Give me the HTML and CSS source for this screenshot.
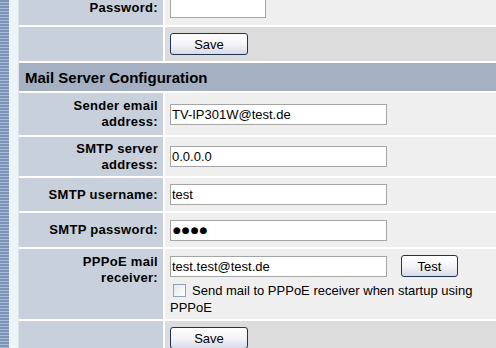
FILE: index.html
```html
<!DOCTYPE html>
<html lang="en">
<head>
  <meta charset="UTF-8">
  <title>Mail Server Configuration</title>
  <link rel="stylesheet" href="styles.css">
</head>
<body>
  <div class="page">
    <div class="stripe"></div>
    <div class="gutter"></div>
    <div class="content">
      <table class="setup">
        <tr class="row-pass">
          <td class="label">Password:</td>
          <td class="value"><input type="password" class="short"></td>
        </tr>
        <tr class="row-save">
          <td class="label"></td>
          <td class="value dark"><button class="btn">Save</button></td>
        </tr>
        <tr class="row-head">
          <td class="head" colspan="2">Mail Server Configuration</td>
        </tr>
        <tr class="row-sender">
          <td class="label">Sender email<br>address:</td>
          <td class="value"><input type="text" value="TV-IP301W@test.de"></td>
        </tr>
        <tr class="row-server">
          <td class="label">SMTP server<br>address:</td>
          <td class="value"><input type="text" value="0.0.0.0"></td>
        </tr>
        <tr class="row-user">
          <td class="label">SMTP username:</td>
          <td class="value"><input type="text" value="test"></td>
        </tr>
        <tr class="row-pw">
          <td class="label">SMTP password:</td>
          <td class="value"><input type="text" class="dots" value="●●●●"></td>
        </tr>
        <tr class="row-pppoe">
          <td class="label top">PPPoE mail<br>receiver:</td>
          <td class="value top">
            <div class="line">
              <input type="text" value="test.test@test.de">
              <button class="btn test">Test</button>
            </div>
            <label class="check"><span class="box"></span>Send mail to PPPoE receiver when startup using PPPoE</label>
          </td>
        </tr>
        <tr class="row-last">
          <td class="label"></td>
          <td class="value dark top"><button class="btn">Save</button></td>
        </tr>
      </table>
    </div>
  </div>
</body>
</html>
```

FILE: styles.css
```css
body {
  margin: 0;
  font-family: "Liberation Sans", Arial, sans-serif;
  background: #ffffff;
  overflow: hidden;
}

.page {
  display: flex;
  height: 348px;
}

.stripe {
  width: 9px;
  background: repeating-linear-gradient(180deg, #7892b8 0, #7892b8 2px, #a9bcd6 2px, #a9bcd6 3px);
}

.gutter {
  width: 9px;
  background: #eef3f7;
  border-right: 1px solid #dde3ea;
}

.content {
  flex: 1;
  overflow: hidden;
}

.setup {
  width: 100%;
  margin-top: -12px;
  border-collapse: separate;
  border-spacing: 0 2px;
  background: #ffffff;
}

.setup td {
  padding: 0;
  vertical-align: middle;
}

.label {
  width: 139px;
  background: #c8d0dc;
  text-align: right;
  font-weight: bold;
  font-size: 13px;
  line-height: 16px;
  padding-right: 5px !important;
  letter-spacing: 0.3px;
  color: #000;
  border-right: 2px solid #ffffff;
}

.value {
  background: #efefef;
  padding-left: 5px !important;
}

.value.dark {
  background: #dcdcdc;
}

.top {
  vertical-align: top !important;
}

.head {
  background: #a5b1c3;
  font-weight: bold;
  font-size: 15px;
  padding-left: 6px !important;
  color: #000;
}

.row-pass { height: 35px; }
.row-save { height: 34px; }
.row-head { height: 28px; }
.row-sender { height: 42px; }
.row-server { height: 39px; }
.row-user { height: 33px; }
.row-pw { height: 34px; }
.row-pppoe { height: 70px; }
.row-last { height: 40px; }

.row-pppoe .label { padding-top: 5px !important; }
.row-pppoe .value { padding-top: 7px !important; }
.row-last .value { padding-top: 6px !important; }

input {
  box-sizing: border-box;
  width: 217px;
  height: 21px;
  margin: 0;
  padding: 0 1px;
  border: 1px solid #a5a5a5;
  background: #ffffff;
  font-family: "Liberation Sans", Arial, sans-serif;
  font-size: 13px;
  color: #000;
  vertical-align: middle;
}

input.short {
  width: 96px;
}

input.dots {
  font-family: "DejaVu Sans", sans-serif;
  font-size: 9px;
  letter-spacing: 1px;
  padding-left: 2px;
}

.btn {
  box-sizing: border-box;
  width: 78px;
  height: 22px;
  margin: 0;
  padding: 0;
  border: 1px solid #1f3453;
  border-radius: 3px;
  background: linear-gradient(180deg, #ffffff 0%, #f4f4f8 50%, #d8dce8 100%);
  font-family: "Liberation Sans", Arial, sans-serif;
  font-size: 13px;
  color: #000;
  vertical-align: middle;
}

.btn.test {
  width: 57px;
  margin-left: 14px;
  margin-top: -1px;
}

.line {
  display: flex;
  align-items: flex-start;
}

.check {
  display: block;
  margin-top: 5px;
  font-size: 13px;
  line-height: 17px;
  color: #000;
}

.box {
  display: inline-block;
  box-sizing: border-box;
  width: 13px;
  height: 13px;
  margin: 0 6px 0 3px;
  border: 1px solid #8ea2bb;
  background: linear-gradient(135deg, #e4e8ee, #ffffff);
  vertical-align: -2px;
}
```
